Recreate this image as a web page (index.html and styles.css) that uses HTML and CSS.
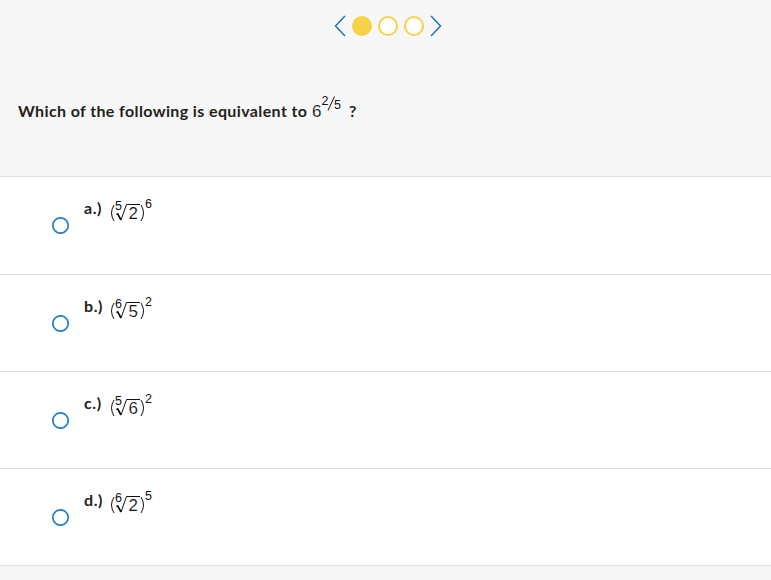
FILE: index.html
```html
<!DOCTYPE html>
<html lang="en">
<head>
  <meta charset="UTF-8">
  <title>Quiz</title>
  <link rel="stylesheet" href="styles.css">
</head>
<body>

  <!-- Question -->
  <header class="question">
    <nav class="pager">
      <svg class="arrow" width="12" height="22" viewBox="0 0 12 22"><path d="M11 1L1.5 11L11 21"/></svg>
      <span class="dot active"></span>
      <span class="dot"></span>
      <span class="dot"></span>
      <svg class="arrow" width="12" height="22" viewBox="0 0 12 22"><path d="M1 1L10.5 11L1 21"/></svg>
    </nav>
    <div class="question-text">
      <span class="prompt">Which of the following is equivalent to</span>
      <svg class="power" width="31" height="26" viewBox="0 0 31 26">
        <text class="base" x="0" y="23">6</text>
        <text class="small" x="9.5" y="11">2</text>
        <path d="M16 16.5L22.5 2.5"/>
        <text class="small" x="22" y="15">5</text>
      </svg>
      <span>?</span>
    </div>
  </header>

  <!-- Answers -->
  <ul class="answers">
    <li class="answer first">
      <svg class="radio" width="17" height="17"><circle cx="8.5" cy="8.5" r="7.7"/></svg>
      <div class="choice">
        <span class="letter">a.)</span>
        <svg class="math" width="44" height="28" viewBox="0 0 44 28">
          <path class="paren" d="M4 10Q-1 18 4 26"/>
          <text class="small" x="5" y="15">5</text>
          <path d="M6 19.5L7.5 18.5L11 25L16.5 9.5H30"/>
          <path class="tick" d="M7.5 18.5L11 25"/>
          <text class="base" x="18.5" y="24">2</text>
          <path class="paren" d="M31 10Q36 18 31 26"/>
          <text class="small" x="35" y="13">6</text>
        </svg>
      </div>
    </li>
    <li class="answer">
      <svg class="radio" width="17" height="17"><circle cx="8.5" cy="8.5" r="7.7"/></svg>
      <div class="choice">
        <span class="letter">b.)</span>
        <svg class="math" width="44" height="28" viewBox="0 0 44 28">
          <path class="paren" d="M4 10Q-1 18 4 26"/>
          <text class="small" x="5" y="15">6</text>
          <path d="M6 19.5L7.5 18.5L11 25L16.5 9.5H30"/>
          <path class="tick" d="M7.5 18.5L11 25"/>
          <text class="base" x="18.5" y="24">5</text>
          <path class="paren" d="M31 10Q36 18 31 26"/>
          <text class="small" x="35" y="13">2</text>
        </svg>
      </div>
    </li>
    <li class="answer">
      <svg class="radio" width="17" height="17"><circle cx="8.5" cy="8.5" r="7.7"/></svg>
      <div class="choice">
        <span class="letter">c.)</span>
        <svg class="math" width="44" height="28" viewBox="0 0 44 28">
          <path class="paren" d="M4 10Q-1 18 4 26"/>
          <text class="small" x="5" y="15">5</text>
          <path d="M6 19.5L7.5 18.5L11 25L16.5 9.5H30"/>
          <path class="tick" d="M7.5 18.5L11 25"/>
          <text class="base" x="18.5" y="24">6</text>
          <path class="paren" d="M31 10Q36 18 31 26"/>
          <text class="small" x="35" y="13">2</text>
        </svg>
      </div>
    </li>
    <li class="answer">
      <svg class="radio" width="17" height="17"><circle cx="8.5" cy="8.5" r="7.7"/></svg>
      <div class="choice">
        <span class="letter">d.)</span>
        <svg class="math" width="44" height="28" viewBox="0 0 44 28">
          <path class="paren" d="M4 10Q-1 18 4 26"/>
          <text class="small" x="5" y="15">6</text>
          <path d="M6 19.5L7.5 18.5L11 25L16.5 9.5H30"/>
          <path class="tick" d="M7.5 18.5L11 25"/>
          <text class="base" x="18.5" y="24">2</text>
          <path class="paren" d="M31 10Q36 18 31 26"/>
          <text class="small" x="35" y="13">5</text>
        </svg>
      </div>
    </li>
  </ul>

</body>
</html>
```
FILE: styles.css
```css
* {
  box-sizing: border-box;
}

body {
  margin: 0;
  background: #f7f7f7;
  color: #231f20;
  font-family: Lato, "Liberation Sans", sans-serif;
  font-size: 16px;
  font-weight: bold;
  line-height: 20px;
}

svg {
  display: block;
  flex: none;
}

/* Question */
.question {
  height: 176px;
  padding-top: 15px;
}

.pager {
  display: flex;
  justify-content: center;
  align-items: center;
  gap: 6px;
  height: 22px;
  padding-left: 5px;
}

.arrow {
  fill: none;
  stroke: #2279c3;
  stroke-width: 1.6;
}

.dot {
  width: 20px;
  height: 20px;
  border: 2px solid #f5d246;
  border-radius: 50%;
  background: #fff;
}

.dot.active {
  background: #f5d246;
}

.question-text {
  display: flex;
  align-items: flex-end;
  margin-top: 57px;
  padding-left: 18px;
}

.prompt {
  width: 294px;
  white-space: nowrap;
  letter-spacing: 0.38px;
}

.power {
  margin: 0 6px 1px 0;
}

/* Formulas */
.power,
.math {
  font-family: "Liberation Sans", Arial, sans-serif;
  font-weight: normal;
}

.power path,
.math path {
  fill: none;
  stroke: #111;
  stroke-width: 1;
}

.math .tick {
  stroke-width: 1.6;
}

.base {
  font-size: 17px;
  fill: #111;
  stroke: #fff;
  stroke-width: 0.15;
}

.power .base {
  stroke: #f7f7f7;
}

.small {
  font-size: 12.5px;
  fill: #111;
}

/* Answers */
.answers {
  list-style: none;
  margin: 0;
  padding: 0;
  background: #fff;
  border-bottom: 1px solid #dedede;
}

.answer {
  display: flex;
  align-items: center;
  height: 97px;
  padding-left: 52px;
  border-top: 1px solid #dedede;
}

.answer.first {
  height: 98px;
}

.radio {
  fill: #fff;
  stroke: #2881c8;
  stroke-width: 1.7;
}

.choice {
  display: flex;
  align-self: flex-start;
  margin: 18px 0 0 15px;
}

.letter {
  width: 26px;
  padding-top: 3px;
  letter-spacing: 0.6px;
}
```
